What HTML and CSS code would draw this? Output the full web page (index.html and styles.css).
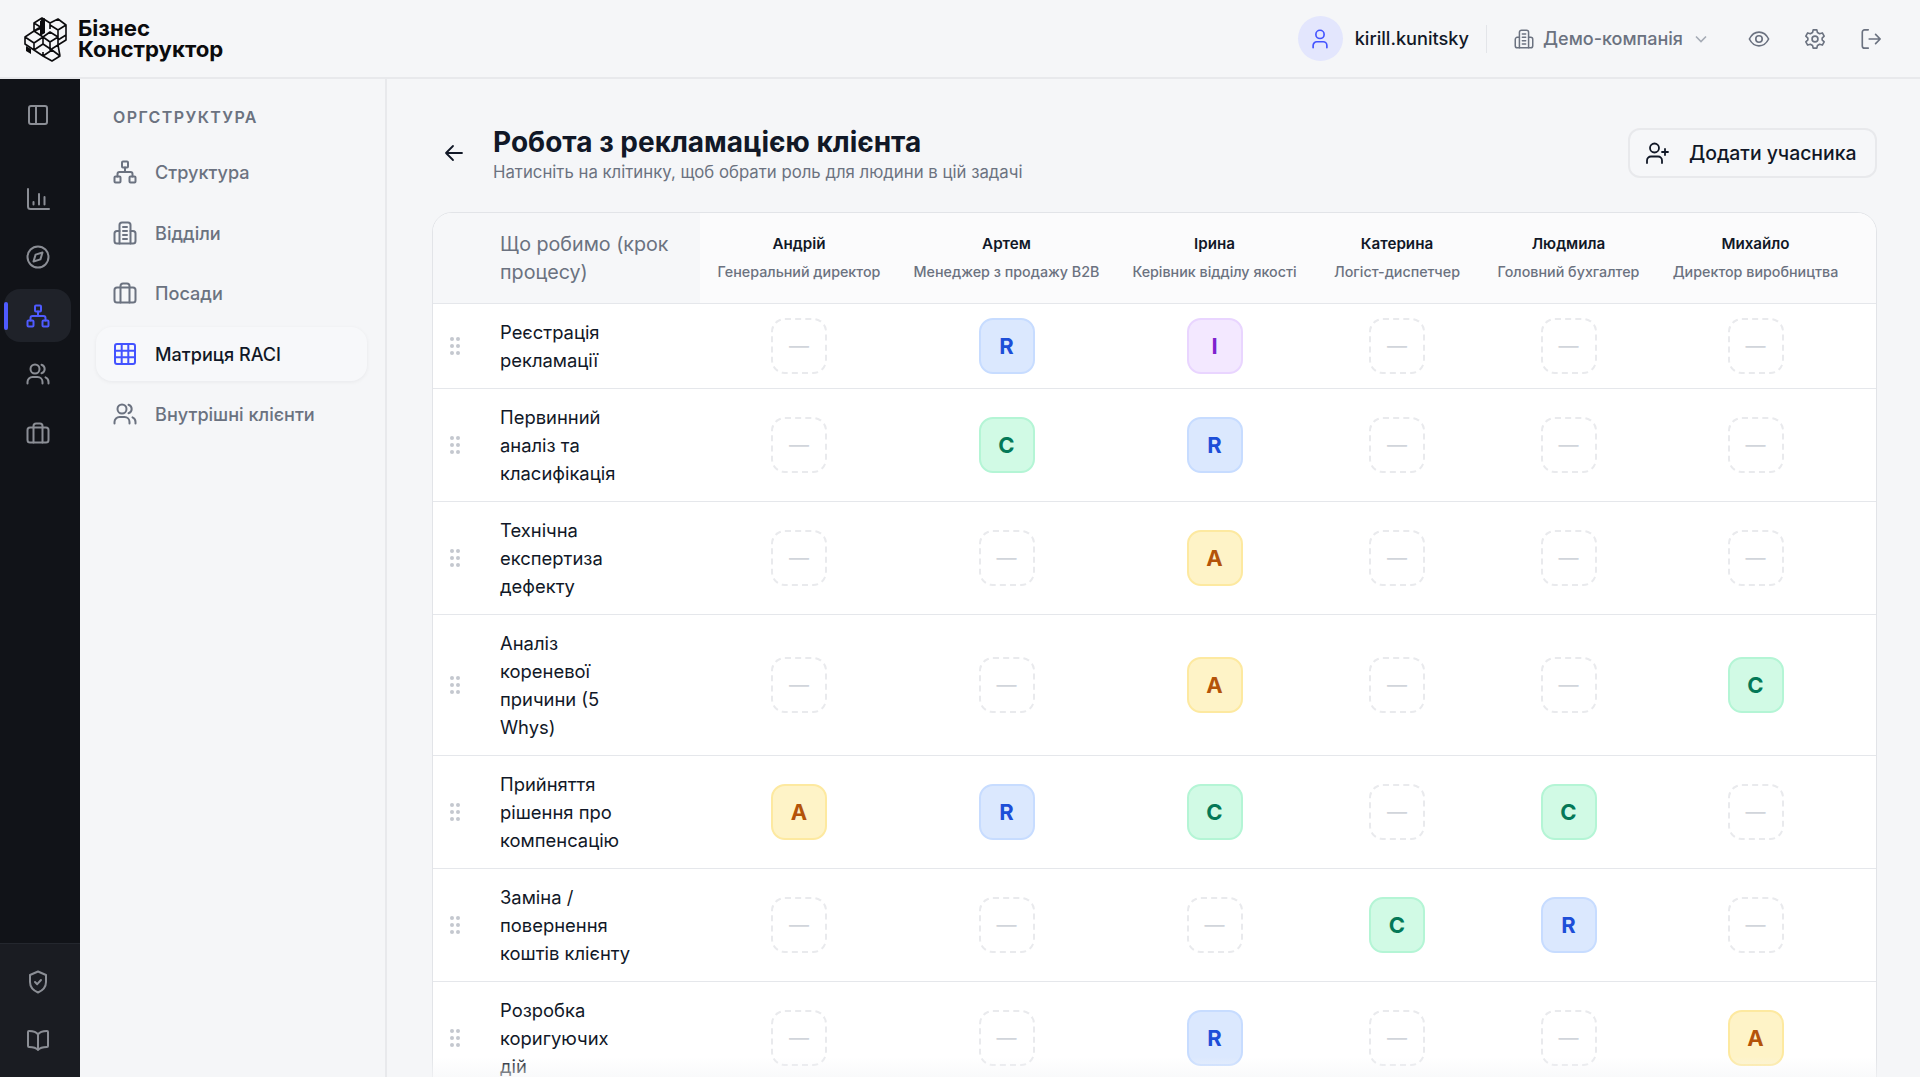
FILE: index.html
```html
<!DOCTYPE html>
<html lang="uk">
<head>
	<meta charset="utf-8">
	<title>Матриця RACI</title>
	<link rel="stylesheet" href="styles.css">
</head>
<body>
	<svg class="icon_defs" width="0" height="0">
		<defs>
			<symbol id="i-org" viewBox="0 0 24 24"><rect x="9" y="1.5" width="6" height="6" rx="1"/><rect x="1.5" y="16.5" width="6" height="6" rx="1"/><rect x="16.5" y="16.5" width="6" height="6" rx="1"/><path d="M12 7.5V12M4.5 16.5V14a2 2 0 0 1 2-2h11a2 2 0 0 1 2 2v2.5"/></symbol>
			<symbol id="i-building" viewBox="0 0 24 24"><path d="M6.5 22.5V4A2.5 2.5 0 0 1 9 1.5h6A2.5 2.5 0 0 1 17.5 4v18.5"/><path d="M6.5 10H4a2.5 2.5 0 0 0-2.5 2.5V20A2.5 2.5 0 0 0 4 22.5h16a2.5 2.5 0 0 0 2.5-2.5v-7.5A2.5 2.5 0 0 0 20 10h-2.5"/><path d="M10 6h4M10 10h4M10 14h4M10 18h4"/></symbol>
			<symbol id="i-case" viewBox="0 0 24 24"><rect x="1.5" y="6.5" width="21" height="15" rx="2.5"/><path d="M7.5 21.5V5A2.5 2.5 0 0 1 10 2.5h4A2.5 2.5 0 0 1 16.5 5v16.5"/></symbol>
			<symbol id="i-users" viewBox="0 0 24 24"><circle cx="9" cy="7" r="4.5"/><path d="M1.5 21.5V20a5 5 0 0 1 5-5h5a5 5 0 0 1 5 5v1.5"/><path d="M15.5 2.7a4.5 4.5 0 0 1 0 8.6M19.5 15.3a5 5 0 0 1 3 4.7v1.5"/></symbol>
			<symbol id="i-grid" viewBox="0 0 24 24"><rect x="2" y="2" width="20" height="20" rx="2"/><path d="M2 8.7h20M2 15.3h20M8.7 2v20M15.3 2v20"/></symbol>
		</defs>
	</svg>

	<header class="topbar">
		<div class="logo">
			<svg class="logo_mark" viewBox="0 0 46 46">
				<path d="M3 21 12 15 21 21 12 27ZM12 15 12 7 20 2 20 10ZM20 2 28 7 28 13M28 7 36 3 44 9 36 14 28 9M44 9V19L36 24V14M36 14 36 24M3 21V28L12 34V27M12 27 21 21V28L12 34M21 21 28 16 36 21 28 26ZM28 26V34L36 29V21M36 29 44 24V19M12 34 21 28 30 34 21 40ZM21 40 30 45 38 40 30 34M21 40V36M36 29 38 40M12 7 20 12 12 15"/>
				<path class="logo_fill" d="M18 5 23 2V17L18 20ZM4 30 9 33V38L4 35Z"/>
			</svg>
			<div class="logo_text">Бізнес<br>Конструктор</div>
		</div>
		<div class="topbar_right">
			<div class="user">
				<span class="avatar">
					<svg class="ic" viewBox="0 0 24 24"><circle cx="12" cy="7" r="4.5"/><path d="M4.5 21.5V19a4 4 0 0 1 4-4h7a4 4 0 0 1 4 4v2.5"/></svg>
				</span>
				<span class="user_name">kirill.kunitsky</span>
			</div>
			<div class="company">
				<svg class="ic"><use href="#i-building"/></svg>
				<span>Демо-компанія</span>
				<svg class="chev" viewBox="0 0 12 8"><path d="M1 1.5 6 6.5 11 1.5"/></svg>
			</div>
			<div class="top_actions">
				<svg class="ic" viewBox="0 0 24 24"><path d="M1.5 12C4 7 7.5 4.5 12 4.5S20 7 22.5 12C20 17 16.5 19.5 12 19.5S4 17 1.5 12Z"/><circle cx="12" cy="12" r="3.5"/></svg>
				<svg class="ic" viewBox="0 0 24 24"><path d="M10 2h4l.7 3 2.3 1.3 3-.9 2 3.5-2.2 2.1v2l2.2 2.1-2 3.5-3-.9L14.700 19l-.7 3h-4l-.7-3L7 17.700l-3 .9-2-3.500L4.200 13v-2L2 8.900l2-3.500 3 .9L9.300 5Z"/><circle cx="12" cy="12" r="3.2"/></svg>
				<svg class="ic" viewBox="0 0 24 24"><path d="M9 2H5a2.5 2.5 0 0 0-2.5 2.5v15A2.5 2.5 0 0 0 5 22h4M10 12h12M17 7l5 5-5 5"/></svg>
			</div>
		</div>
	</header>

	<div class="layout">
		<nav class="rail">
			<div class="rail_top">
				<a class="rail_item rail_toggle"><svg class="ic" viewBox="0 0 24 24"><rect x="3" y="3" width="18" height="18" rx="2"/><path d="M10 3v18"/></svg></a>
				<a class="rail_item"><svg class="ic" viewBox="0 0 24 24"><path d="M2 2v17.5A2.5 2.5 0 0 0 4.5 22H23M7.5 17.5V15M13 17.5V7M18.5 17.5V10"/></svg></a>
				<a class="rail_item"><svg class="ic" viewBox="0 0 24 24"><circle cx="12" cy="12" r="10.5"/><path d="M16.5 7.5 14.400 14.400 7.500 16.500 9.600 9.600Z"/></svg></a>
				<a class="rail_item rail_active"><svg class="ic"><use href="#i-org"/></svg></a>
				<a class="rail_item"><svg class="ic"><use href="#i-users"/></svg></a>
				<a class="rail_item"><svg class="ic"><use href="#i-case"/></svg></a>
			</div>
			<div class="rail_bottom">
				<a class="rail_item"><svg class="ic" viewBox="0 0 24 24"><path d="M12 1.5 20 5v7c0 5-3.4 8.500-8 10.500C7.400 20.500 4 17 4 12V5Z"/><path d="M9 12l2.200 2.200L15 10"/></svg></a>
				<a class="rail_item"><svg class="ic" viewBox="0 0 24 24"><path d="M12 6.500C10.500 4 8 3 3 3a1 1 0 0 0-1 1v14a1 1 0 0 0 1 1c4 0 7 .5 9 3 2-2.500 5-3 9-3a1 1 0 0 0 1-1V4a1 1 0 0 0-1-1c-5 0-7.500 1-9 3.500ZM12 6.500V22"/></svg></a>
			</div>
		</nav>

		<aside class="side">
			<h2 class="side_title">Оргструктура</h2>
			<a class="side_item"><svg class="ic"><use href="#i-org"/></svg>Структура</a>
			<a class="side_item"><svg class="ic"><use href="#i-building"/></svg>Відділи</a>
			<a class="side_item"><svg class="ic"><use href="#i-case"/></svg>Посади</a>
			<a class="side_item side_active"><svg class="ic"><use href="#i-grid"/></svg>Матриця RACI</a>
			<a class="side_item"><svg class="ic"><use href="#i-users"/></svg>Внутрішні клієнти</a>
		</aside>

		<main class="main">
			<div class="page_head">
				<svg class="back ic" viewBox="0 0 24 24"><path d="M20 12H4M11 5l-7 7 7 7"/></svg>
				<div class="page_titles">
					<h1>Робота з рекламацією клієнта</h1>
					<p>Натисніть на клітинку, щоб обрати роль для людини в цій задачі</p>
				</div>
				<button class="add_btn">
					<svg class="ic" viewBox="0 0 24 24"><circle cx="9.5" cy="7" r="4.5"/><path d="M2 22v-2.5a4 4 0 0 1 4-4h7a4 4 0 0 1 4 4V22M20 8v6M17 11h6"/></svg>
					Додати учасника
				</button>
			</div>

			<div class="matrix">
				<table class="raci">
					<colgroup>
						<col class="c_step"><col class="c_a"><col class="c_b"><col class="c_c"><col class="c_d"><col class="c_e"><col class="c_f"><col>
					</colgroup>
					<thead>
						<tr>
							<th class="step_head">Що робимо (крок процесу)</th>
							<th><b>Андрій</b><small>Генеральний директор</small></th>
							<th><b>Артем</b><small>Менеджер з продажу B2B</small></th>
							<th><b>Ірина</b><small>Керівник відділу якості</small></th>
							<th><b>Катерина</b><small>Логіст-диспетчер</small></th>
							<th><b>Людмила</b><small>Головний бухгалтер</small></th>
							<th><b>Михайло</b><small>Директор виробництва</small></th>
							<th></th>
						</tr>
					</thead>
					<tbody>
						<tr>
							<td><div class="step"><span class="drag"><i></i><i></i><i></i><i></i><i></i><i></i></span><span>Реєстрація<br>рекламації</span></div></td>
							<td><span class="role role_none">—</span></td>
							<td><span class="role role_r">R</span></td>
							<td><span class="role role_i">I</span></td>
							<td><span class="role role_none">—</span></td>
							<td><span class="role role_none">—</span></td>
							<td><span class="role role_none">—</span></td>
							<td></td>
						</tr>
						<tr>
							<td><div class="step"><span class="drag"><i></i><i></i><i></i><i></i><i></i><i></i></span><span>Первинний<br>аналіз та<br>класифікація</span></div></td>
							<td><span class="role role_none">—</span></td>
							<td><span class="role role_c">C</span></td>
							<td><span class="role role_r">R</span></td>
							<td><span class="role role_none">—</span></td>
							<td><span class="role role_none">—</span></td>
							<td><span class="role role_none">—</span></td>
							<td></td>
						</tr>
						<tr>
							<td><div class="step"><span class="drag"><i></i><i></i><i></i><i></i><i></i><i></i></span><span>Технічна<br>експертиза<br>дефекту</span></div></td>
							<td><span class="role role_none">—</span></td>
							<td><span class="role role_none">—</span></td>
							<td><span class="role role_a">A</span></td>
							<td><span class="role role_none">—</span></td>
							<td><span class="role role_none">—</span></td>
							<td><span class="role role_none">—</span></td>
							<td></td>
						</tr>
						<tr>
							<td><div class="step"><span class="drag"><i></i><i></i><i></i><i></i><i></i><i></i></span><span>Аналіз<br>кореневої<br>причини (5<br>Whys)</span></div></td>
							<td><span class="role role_none">—</span></td>
							<td><span class="role role_none">—</span></td>
							<td><span class="role role_a">A</span></td>
							<td><span class="role role_none">—</span></td>
							<td><span class="role role_none">—</span></td>
							<td><span class="role role_c">C</span></td>
							<td></td>
						</tr>
						<tr>
							<td><div class="step"><span class="drag"><i></i><i></i><i></i><i></i><i></i><i></i></span><span>Прийняття<br>рішення про<br>компенсацію</span></div></td>
							<td><span class="role role_a">A</span></td>
							<td><span class="role role_r">R</span></td>
							<td><span class="role role_c">C</span></td>
							<td><span class="role role_none">—</span></td>
							<td><span class="role role_c">C</span></td>
							<td><span class="role role_none">—</span></td>
							<td></td>
						</tr>
						<tr>
							<td><div class="step"><span class="drag"><i></i><i></i><i></i><i></i><i></i><i></i></span><span>Заміна /<br>повернення<br>коштів клієнту</span></div></td>
							<td><span class="role role_none">—</span></td>
							<td><span class="role role_none">—</span></td>
							<td><span class="role role_none">—</span></td>
							<td><span class="role role_c">C</span></td>
							<td><span class="role role_r">R</span></td>
							<td><span class="role role_none">—</span></td>
							<td></td>
						</tr>
						<tr>
							<td><div class="step"><span class="drag"><i></i><i></i><i></i><i></i><i></i><i></i></span><span>Розробка<br>коригуючих<br>дій</span></div></td>
							<td><span class="role role_none">—</span></td>
							<td><span class="role role_none">—</span></td>
							<td><span class="role role_r">R</span></td>
							<td><span class="role role_none">—</span></td>
							<td><span class="role role_none">—</span></td>
							<td><span class="role role_a">A</span></td>
							<td></td>
						</tr>
					</tbody>
				</table>
				<div class="fade"></div>
			</div>
		</main>
	</div>
</body>
</html>
```

FILE: styles.css
```css
*{
	margin:0;
	padding:0;
	box-sizing:border-box;
}

html,
body{
	height:100%;
	overflow:hidden;
}

body{
	font-family:Inter, "Noto Sans", sans-serif;
	background:#f5f6f8;
	color:#111827;
}

.icon_defs{
	position:absolute;
}

.ic{
	width:24px;
	height:24px;
	flex:none;
	fill:none;
	stroke:currentColor;
	stroke-width:1.8;
	stroke-linecap:round;
	stroke-linejoin:round;
}

/* top bar */
.topbar{
	height:79px;
	display:flex;
	align-items:center;
	justify-content:space-between;
	border-bottom:2px solid #e8e9ec;
	padding:0 38px 0 22px;
}

.logo{
	display:flex;
	align-items:center;
	gap:10px;
}

.logo_mark{
	width:46px;
	height:46px;
	fill:none;
	stroke:#0b0b0d;
	stroke-width:1.6;
	stroke-linejoin:round;
}

.logo_fill{
	fill:#0b0b0d;
	stroke:none;
}

.logo_text{
	font-size:22.2px;
	line-height:21px;
	font-weight:700;
	color:#0b0b0d;
	padding-bottom:2px;
}

.topbar_right{
	display:flex;
	align-items:center;
}

.user{
	display:flex;
	align-items:center;
	gap:12px;
	padding-right:17px;
	border-right:1px solid #e3e5e9;
	height:28px;
}

.avatar{
	width:45px;
	height:45px;
	border-radius:50%;
	background:#e3e6fd;
	color:#4353ff;
	display:flex;
	align-items:center;
	justify-content:center;
}

.avatar .ic{
	width:22px;
	height:22px;
}

.user_name{
	font-size:18.2px;
	font-weight:500;
	padding-bottom:2px;
}

.company{
	display:flex;
	align-items:center;
	gap:9px;
	margin-left:27px;
	font-size:18px;
	font-weight:500;
	color:#6b7280;
}

.company .ic{
	width:20px;
	height:22px;
}

.chev{
	width:12px;
	height:8px;
	margin-left:3px;
	fill:none;
	stroke:#a5abb5;
	stroke-width:1.6;
}

.top_actions{
	display:flex;
	gap:34px;
	margin-left:41px;
	color:#6b7280;
}

.top_actions .ic{
	width:22px;
	height:22px;
}

/* layout */
.layout{
	display:flex;
	height:998px;
}

.rail{
	width:80px;
	background:#111318;
	color:#8b8e95;
	display:flex;
	flex-direction:column;
	justify-content:space-between;
}

.rail_top{
	padding-top:9px;
}

.rail_item{
	display:flex;
	align-items:center;
	justify-content:center;
	width:67px;
	height:53px;
	margin:0 0 5.6px 4px;
	border-radius:16px;
	position:relative;
}

.rail_toggle{
	margin-bottom:31px;
}

.rail_active{
	background:#1f2229;
	color:#4f5bff;
}

.rail_active:before{
	content:"";
	position:absolute;
	left:0;
	top:13px;
	width:4px;
	height:28px;
	background:#4f5bff;
	border-radius:2px;
}

.rail_bottom{
	background:#1a1c22;
	border-top:1px solid #24272e;
	padding:11px 0 5px;
	height:134px;
}

.side{
	width:307px;
	padding:23px 18px 0 16px;
	border-right:2px solid #e8e9ec;
	flex:none;
}

.side_title{
	font-size:16px;
	font-weight:600;
	letter-spacing:1.4px;
	text-transform:uppercase;
	color:#6b7280;
	padding-left:17px;
	line-height:30px;
	margin-bottom:13px;
}

.side_item{
	display:flex;
	align-items:center;
	gap:18px;
	height:54px;
	margin-bottom:6.6px;
	padding-left:17px;
	font-size:18.1px;
	font-weight:500;
	color:#6b7280;
	border-radius:16px;
}

.side_item .ic,
.rail_item .ic{
	stroke-width:2;
}

.side_active{
	color:#111827;
	background:#f7f8fa;
	box-shadow:0 1px 4px rgba(17,24,39,0.06);
}

.side_active .ic{
	color:#4353ff;
}

/* main */
.main{
	flex:1;
	min-width:0;
	padding:43px 43px 0 45px;
	overflow:hidden;
	position:relative;
}

.page_head{
	display:flex;
	align-items:center;
	margin-bottom:28px;
}

.back{
	margin-left:10px;
	margin-right:27px;
	color:#111827;
}

.page_titles{
	flex:1;
	padding-top:2px;
}

h1{
	font-size:28px;
	line-height:36px;
	font-weight:700;
	color:#111827;
}

.page_titles p{
	font-size:16.75px;
	line-height:24px;
	color:#6b7280;
}

.add_btn{
	display:flex;
	align-items:center;
	gap:20px;
	width:249px;
	height:50px;
	padding-left:15px;
	font-family:inherit;
	font-size:19.4px;
	font-weight:500;
	color:#111827;
	background:#f6f7f9;
	border:2px solid #e8e9ec;
	border-radius:12px;
}

/* matrix table */
.matrix{
	background:#fff;
	border:1px solid #e2e4e8;
	border-radius:20px 20px 0 0;
	overflow:hidden;
}

.raci{
	width:100%;
	table-layout:fixed;
	border-collapse:collapse;
}

.c_step{width:267px;}
.c_a{width:198px;}
.c_b{width:217px;}
.c_c{width:199px;}
.c_d{width:166px;}
.c_e{width:177px;}
.c_f{width:197px;}

.raci th{
	height:90px;
	background:#fbfbfc;
	text-align:center;
	font-weight:500;
	border-bottom:1px solid #e5e7eb;
}

.raci th b{
	display:block;
	font-size:15.2px;
	line-height:20px;
	font-weight:600;
	color:#111827;
	margin-bottom:8px;
}

.raci th small{
	display:block;
	font-size:14.3px;
	line-height:20px;
	font-weight:500;
	color:#6b7280;
	white-space:nowrap;
}

.raci th.step_head{
	background:#f6f7f9;
	font-size:19.7px;
	line-height:28px;
	font-weight:400;
	color:#6b7280;
	text-align:left;
	padding:0 10px 0 67px;
}

.raci td{
	padding:14px 0;
	text-align:center;
	vertical-align:middle;
	border-bottom:1px solid #e5e7eb;
}

.step{
	display:flex;
	align-items:center;
	text-align:left;
	font-size:18.4px;
	line-height:28px;
	color:#111827;
	padding-left:17px;
	gap:40px;
}

.drag{
	display:grid;
	grid-template-columns:4px 4px;
	gap:3px 2px;
	flex:none;
}

.drag i{
	width:4px;
	height:4px;
	border-radius:50%;
	background:#c4c8cf;
}

.role{
	display:inline-flex;
	align-items:center;
	justify-content:center;
	width:56px;
	height:56px;
	border-radius:14px;
	border:2px solid;
	font-size:22px;
	font-weight:700;
	vertical-align:middle;
}

.role_none{
	border:2px dashed #e9eaed;
	color:#d1d5db;
	font-weight:400;
	font-size:20px;
}

.role_r{background:#dbe8fe; border-color:#c7dcff; color:#1d4ed8;}
.role_c{background:#d1fae5; border-color:#b4f5d5; color:#047857;}
.role_a{background:#fef3c7; border-color:#fde9a0; color:#b45309;}
.role_i{background:#f3e8ff; border-color:#e9d5ff; color:#7e22ce;}

.fade{
	position:absolute;
	left:0;
	right:0;
	bottom:0;
	height:20px;
	background:linear-gradient(rgba(245,246,248,0), rgba(245,246,248,0.6));
}
```
